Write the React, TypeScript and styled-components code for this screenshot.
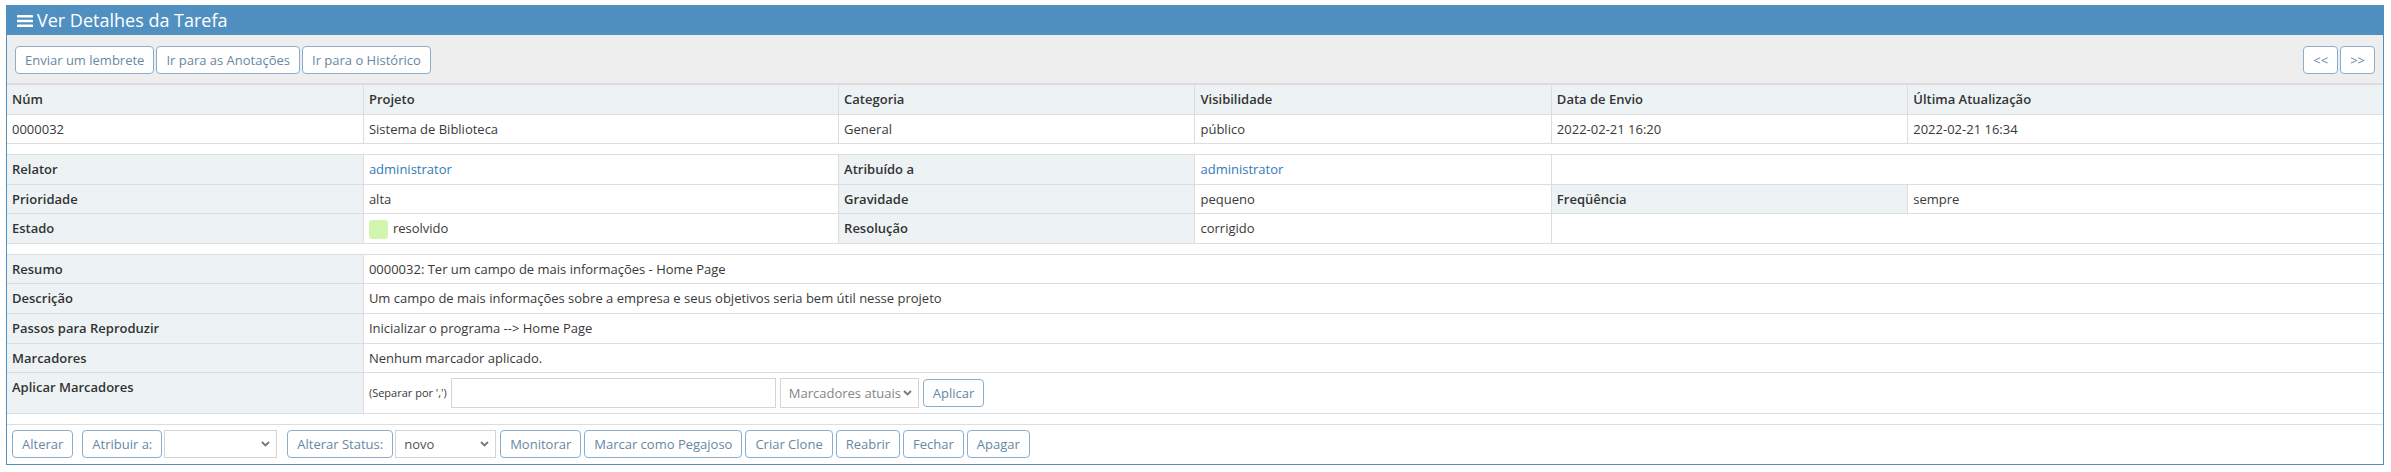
import React from "react";
import styled, { createGlobalStyle } from "styled-components";

const GlobalStyle = createGlobalStyle`
  body {
    margin: 0;
    background: #fff;
    font-family: "Open Sans", "Noto Sans", Arial, sans-serif;
    font-size: 13px;
    color: #393939;
  }
`;

const Page = styled.div`
  padding: 5px 7px 0 6px;
`;

const Widget = styled.div`
  border: 1px solid #5090c1;
  background: #fff;
`;

const Header = styled.div`
  display: flex;
  align-items: center;
  gap: 4px;
  height: 29px;
  padding-left: 10px;
  background: #5090c1;
  color: #fff;
`;

const Title = styled.h4`
  margin: 0;
  font-size: 18px;
  font-weight: 400;
  line-height: 29px;
`;

const Toolbox = styled.div`
  display: flex;
  justify-content: space-between;
  align-items: center;
  padding: 11px 8px 9px;
  background: #eee;
  border-bottom: 2px solid #dcdcdc;
`;

const ButtonGroup = styled.div<{ $gap?: number }>`
  display: flex;
  gap: ${(p) => p.$gap ?? 2}px;
`;

const Button = styled.button`
  height: 28px;
  padding: 0 9px;
  font-family: inherit;
  font-size: 13px;
  line-height: 26px;
  color: #6688a6;
  background: #fff;
  border: 1px solid #8aafce;
  border-radius: 4px;
  cursor: pointer;
  white-space: nowrap;
`;

const Table = styled.table`
  width: 100%;
  border-collapse: collapse;
  border-style: hidden;
  table-layout: fixed;
  font-size: 13px;
`;

const Cell = styled.td<{ $label?: boolean }>`
  padding: 5px;
  border: 1px solid #ddd;
  text-align: left;
  vertical-align: top;
  line-height: 1.42857;
  background: ${(p) => (p.$label ? "#edf3f4" : "#fff")};
  font-weight: ${(p) => (p.$label ? 600 : 400)};
  color: ${(p) => (p.$label ? "#333" : "#393939")};
  white-space: nowrap;
`;

const HeadCell = styled(Cell).attrs({ as: "th" })``;

const Spacer = styled.td`
  height: 10px;
  padding: 0;
  border: 1px solid #ddd;
  border-left: none;
  border-right: none;
`;

const Link = styled.a`
  color: #337ab7;
  text-decoration: none;
`;

const Swatch = styled.span<{ $color: string }>`
  display: inline-block;
  width: 19px;
  height: 19px;
  margin: -2px 5px -2px 0;
  vertical-align: middle;
  border-radius: 3px;
  background: ${(p) => p.$color};
`;

const TagCell = styled.div`
  display: flex;
  align-items: center;
  gap: 4px;
`;

const Small = styled.span`
  font-size: 11px;
  color: #393939;
`;

const TextInput = styled.input`
  width: 325px;
  height: 30px;
  box-sizing: border-box;
  border: 1px solid #d5d5d5;
  padding: 4px 6px;
  font-family: inherit;
  font-size: 13px;
`;

const SelectWrap = styled.div<{ $width: number; $height?: number }>`
  position: relative;
  width: ${(p) => p.$width}px;
  height: ${(p) => p.$height ?? 28}px;
  box-sizing: border-box;
  border: 1px solid #d5d5d5;
  background: #fff;
  display: flex;
  align-items: center;
  padding: 0 0 0 8px;
  font-size: 13px;
  color: #555;
  white-space: nowrap;
`;

const Placeholder = styled.span`
  color: #858585;
`;

const Chevron = styled.svg`
  position: absolute;
  right: 6px;
  top: 50%;
  margin-top: -3px;
`;

const ActionRow = styled.td`
  padding: 5px 5px 6px;
  border: 1px solid #ddd;
  background: #fff;
`;

const Actions = styled.div`
  display: flex;
  align-items: center;
  gap: 3px;
`;

const ActionForm = styled.div`
  display: flex;
  align-items: center;
  gap: 2px;
  margin: 0 1px 0 6px;
`;

const Bars = () => (
  <svg width="16" height="12" viewBox="0 0 16 12">
    <rect x="0" y="0" width="16" height="2.4" rx="0.6" fill="#fff" />
    <rect x="0" y="4.8" width="16" height="2.4" rx="0.6" fill="#fff" />
    <rect x="0" y="9.6" width="16" height="2.4" rx="0.6" fill="#fff" />
  </svg>
);

const Select: React.FC<{ width: number; height?: number; children?: React.ReactNode }> = ({
  width,
  height,
  children,
}) => (
  <SelectWrap $width={width} $height={height}>
    {children}
    <Chevron width="9" height="6" viewBox="0 0 9 6">
      <polyline points="1,1 4.5,4.5 8,1" fill="none" stroke="#777" strokeWidth="1.8" />
    </Chevron>
  </SelectWrap>
);

const topCols = ["Núm", "Projeto", "Categoria", "Visibilidade", "Data de Envio", "Última Atualização"];
const topVals = ["0000032", "Sistema de Biblioteca", "General", "público", "2022-02-21 16:20", "2022-02-21 16:34"];

const wideRows: [string, string][] = [
  ["Resumo", "0000032: Ter um campo de mais informações - Home Page"],
  ["Descrição", "Um campo de mais informações sobre a empresa e seus objetivos seria bem útil nesse projeto"],
  ["Passos para Reproduzir", "Inicializar o programa --> Home Page"],
  ["Marcadores", "Nenhum marcador aplicado."],
];

export default function App() {
  return (
    <Page>
      <GlobalStyle />
      <Widget>
        <Header>
          <Bars />
          <Title>Ver Detalhes da Tarefa</Title>
        </Header>
        <Toolbox>
          <ButtonGroup $gap={2}>
            <Button>Enviar um lembrete</Button>
            <Button>Ir para as Anotações</Button>
            <Button>Ir para o Histórico</Button>
          </ButtonGroup>
          <ButtonGroup $gap={2}>
            <Button>&lt;&lt;</Button>
            <Button>&gt;&gt;</Button>
          </ButtonGroup>
        </Toolbox>
        <Table>
          <colgroup>
            <col style={{ width: "15%" }} />
            <col style={{ width: "20%" }} />
            <col style={{ width: "15%" }} />
            <col style={{ width: "15%" }} />
            <col style={{ width: "15%" }} />
            <col style={{ width: "20%" }} />
          </colgroup>
          <thead>
            <tr>
              {topCols.map((c) => (
                <HeadCell key={c} $label>
                  {c}
                </HeadCell>
              ))}
            </tr>
          </thead>
          <tbody>
            <tr>
              {topVals.map((v) => (
                <Cell key={v}>{v}</Cell>
              ))}
            </tr>
            <tr>
              <Spacer colSpan={6} />
            </tr>
            <tr>
              <Cell $label>Relator</Cell>
              <Cell>
                <Link href="#">administrator</Link>
              </Cell>
              <Cell $label>Atribuído a</Cell>
              <Cell>
                <Link href="#">administrator</Link>
              </Cell>
              <Cell colSpan={2} />
            </tr>
            <tr>
              <Cell $label>Prioridade</Cell>
              <Cell>alta</Cell>
              <Cell $label>Gravidade</Cell>
              <Cell>pequeno</Cell>
              <Cell $label>Freqüência</Cell>
              <Cell>sempre</Cell>
            </tr>
            <tr>
              <Cell $label>Estado</Cell>
              <Cell>
                <Swatch $color="#d2f5b0" />
                resolvido
              </Cell>
              <Cell $label>Resolução</Cell>
              <Cell>corrigido</Cell>
              <Cell colSpan={2} />
            </tr>
            <tr>
              <Spacer colSpan={6} />
            </tr>
            {wideRows.map(([label, value]) => (
              <tr key={label}>
                <Cell $label>{label}</Cell>
                <Cell colSpan={5}>{value}</Cell>
              </tr>
            ))}
            <tr>
              <Cell $label>Aplicar Marcadores</Cell>
              <Cell colSpan={5}>
                <TagCell>
                  <Small>(Separar por ',')</Small>
                  <TextInput type="text" />
                  <Select width={139} height={30}>
                    <Placeholder>Marcadores atuais</Placeholder>
                  </Select>
                  <Button>Aplicar</Button>
                </TagCell>
              </Cell>
            </tr>
            <tr>
              <Spacer colSpan={6} />
            </tr>
            <tr>
              <ActionRow colSpan={6}>
                <Actions>
                  <Button>Alterar</Button>
                  <ActionForm>
                    <Button>Atribuir a:</Button>
                    <Select width={113} />
                  </ActionForm>
                  <ActionForm>
                    <Button>Alterar Status:</Button>
                    <Select width={101}>novo</Select>
                  </ActionForm>
                  <Button>Monitorar</Button>
                  <Button>Marcar como Pegajoso</Button>
                  <Button>Criar Clone</Button>
                  <Button>Reabrir</Button>
                  <Button>Fechar</Button>
                  <Button>Apagar</Button>
                </Actions>
              </ActionRow>
            </tr>
          </tbody>
        </Table>
      </Widget>
    </Page>
  );
}
